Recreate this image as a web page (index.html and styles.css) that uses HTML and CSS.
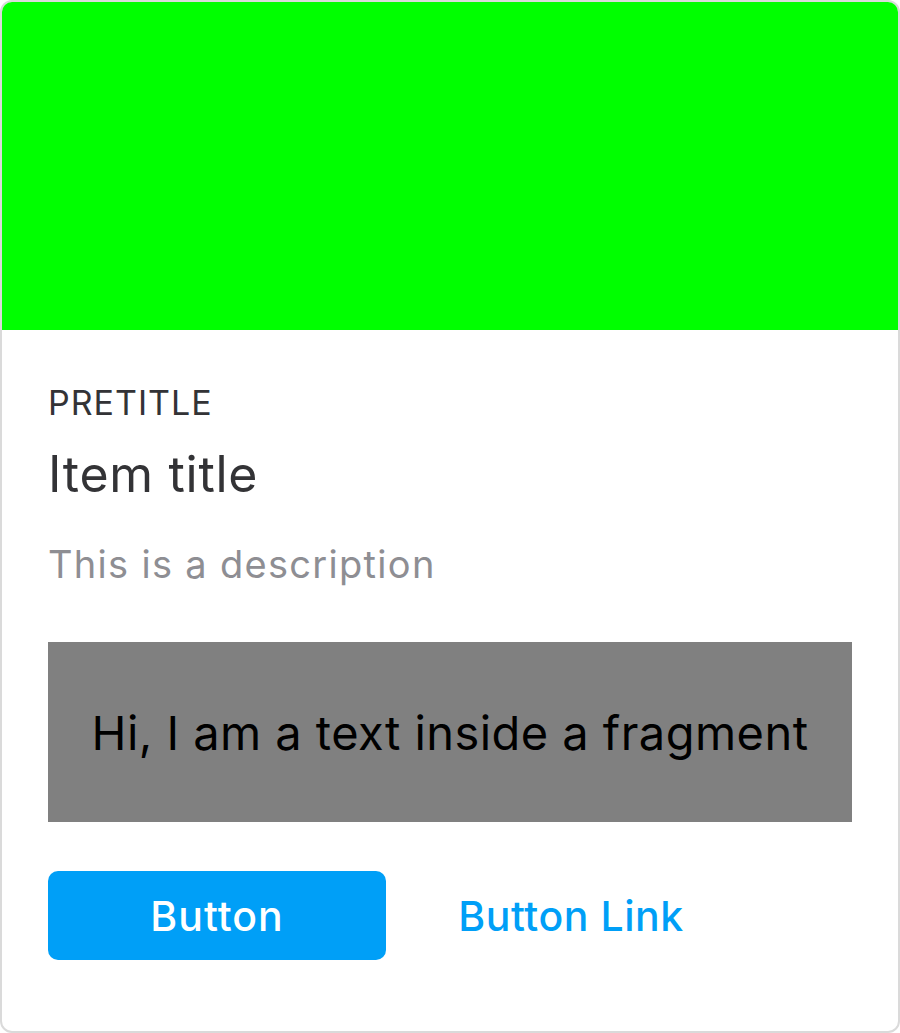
FILE: index.html
```html
<!DOCTYPE html>
<html>
<head>
<meta charset="utf-8">
<link rel="stylesheet" href="styles.css">
</head>
<body>
<div class="card">
  <div class="media"></div>
  <div class="content">
    <div class="pretitle">PRETITLE</div>
    <div class="title">Item title</div>
    <div class="desc">This is a description</div>
    <div class="fragment">Hi, I am a text inside a fragment</div>
    <div class="actions">
      <a class="btn btn-fill">Button</a>
      <a class="btn btn-link">Button Link</a>
    </div>
  </div>
</div>
</body>
</html>
```
FILE: styles.css
```css
html, body {
  margin: 0;
  padding: 0;
  background: #ffffff;
}
body {
  font-family: Inter, "Noto Sans", sans-serif;
}
.card {
  box-sizing: border-box;
  width: 900px;
  height: 1033px;
  border: 2px solid #dadada;
  border-radius: 12px;
  overflow: hidden;
  display: flex;
  flex-direction: column;
}
.media {
  height: 328px;
  background: #00ff00;
  flex: none;
}
.content {
  padding: 53px 46px 0 46px;
}
.pretitle {
  font-size: 34px;
  line-height: 40px;
  color: #333336;
  letter-spacing: 1px;
}
.title {
  margin-top: 21px;
  font-size: 50px;
  line-height: 60px;
  color: #333336;
  letter-spacing: 0.7px;
}
.desc {
  margin-top: 37px;
  font-size: 38px;
  line-height: 46px;
  color: #8e8e93;
  letter-spacing: 1.3px;
}
.fragment {
  margin-top: 55px;
  height: 180px;
  background: #808080;
  color: #000000;
  font-size: 47px;
  letter-spacing: 0.45px;
  display: flex;
  align-items: center;
  justify-content: center;
}
.actions {
  margin-top: 49px;
  display: flex;
  gap: 16px;
}
.btn {
  width: 338px;
  height: 89px;
  border-radius: 10px;
  display: flex;
  align-items: center;
  justify-content: center;
  font-size: 41px;
  font-weight: 500;
}
.btn-fill {
  background: #009ff7;
  color: #ffffff;
  letter-spacing: 1px;
}
.btn-link {
  color: #009ff7;
  letter-spacing: 0.55px;
}
```
